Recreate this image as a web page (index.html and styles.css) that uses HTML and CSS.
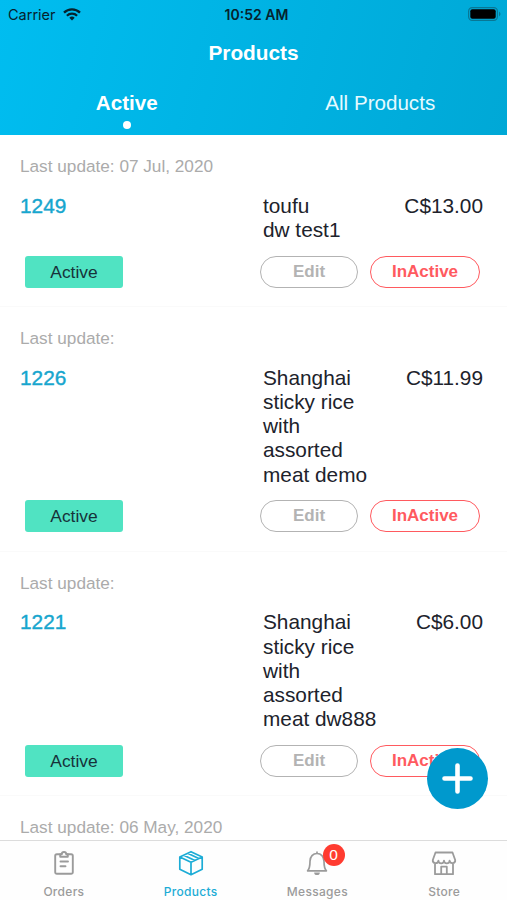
FILE: index.html
```html
<!DOCTYPE html>
<html lang="en">
<head>
<meta charset="utf-8">
<title>Products</title>
<link rel="stylesheet" href="styles.css">
</head>
<body>
<div class="screen">
  <header class="header">
    <div class="status">
      <div class="carrier"><span class="carrier-name">Carrier</span>
        <svg class="wifi" width="18" height="13" viewBox="0 0 18 13" fill="none" stroke="#06222d" stroke-width="2.3"><path d="M1 4.6a11.5 11.5 0 0 1 16 0"/><path d="M3.9 7.8a7.3 7.3 0 0 1 10.2 0"/><path d="M9 12.4 6.3 9.8a3.8 3.8 0 0 1 5.4 0z" fill="#06222d" stroke="none"/></svg>
      </div>
      <div class="clock">10:52 AM</div>
      <div class="power">
        <svg width="33" height="14" viewBox="0 0 33 14"><rect x=".6" y=".6" width="28.8" height="12.8" rx="3.6" fill="none" stroke="#087795" stroke-width="1.2"/><rect x="2.3" y="2.3" width="25.4" height="9.4" rx="2" fill="#000"/><path d="M31 4.6q3 2.4 0 4.8z" fill="#087795"/></svg>
      </div>
    </div>
    <h1 class="title">Products</h1>
    <nav class="tabs">
      <div class="tab tab-on"><span>Active</span><i class="dot"></i></div>
      <div class="tab"><span>All Products</span></div>
    </nav>
  </header>
  <main class="list">
    <article class="item">
      <div class="date">Last update: 07 Jul, 2020</div>
      <div class="info"><span class="num">1249</span><span class="name">toufu<br>dw test1</span><span class="price">C$13.00</span></div>
      <div class="actions"><span class="state">Active</span><button class="btn edit">Edit</button><button class="btn off">InActive</button></div>
    </article>
    <article class="item">
      <div class="date">Last update:</div>
      <div class="info"><span class="num">1226</span><span class="name">Shanghai<br>sticky rice<br>with<br>assorted<br>meat demo</span><span class="price">C$11.99</span></div>
      <div class="actions"><span class="state">Active</span><button class="btn edit">Edit</button><button class="btn off">InActive</button></div>
    </article>
    <article class="item">
      <div class="date">Last update:</div>
      <div class="info"><span class="num">1221</span><span class="name">Shanghai<br>sticky rice<br>with<br>assorted<br>meat dw888</span><span class="price">C$6.00</span></div>
      <div class="actions"><span class="state">Active</span><button class="btn edit">Edit</button><button class="btn off">InActive</button></div>
    </article>
    <article class="item">
      <div class="date">Last update: 06 May, 2020</div>
    </article>
  </main>
  <nav class="bar">
    <a class="link">
      <svg class="icon" width="28" height="28" viewBox="0 0 28 28" fill="none" stroke="#9b9b9b" stroke-width="1.9" stroke-linejoin="round" stroke-linecap="round"><path d="M10.5 5.2H6.8a1.6 1.6 0 0 0-1.6 1.6v16.4a1.6 1.6 0 0 0 1.6 1.6h14.4a1.6 1.6 0 0 0 1.6-1.6V6.800a1.600 1.600 0 0 0-1.600-1.600h-3.700"/><path d="M10.200 7.700V5.200h1.600a2.200 2.200 0 0 1 4.400 0h1.600v2.500z"/><path d="M10.500 12.500h7.500M10.500 17.300h5"/></svg>
      <span>Orders</span>
    </a>
    <a class="link link-on">
      <svg class="icon" width="28" height="28" viewBox="0 0 28 28" fill="none" stroke="#1cacd6" stroke-width="1.7" stroke-linejoin="round"><path d="M14 2.700 25.200 8v12.200L14 25.700 2.800 20.200V8zM2.800 8 14 13.300 25.200 8M14 13.300v12.400M10.600 4.300l11.200 5.300M6.700 6.200l11.300 5.300"/></svg>
      <span>Products</span>
    </a>
    <a class="link">
      <svg class="icon" width="28" height="28" viewBox="0 0 28 28" fill="none" stroke="#9b9b9b" stroke-width="1.700" stroke-linejoin="round"><path d="M14 2.500v2M4.600 21.800h18.800c-2-2-2.400-4-2.400-9.500 0-4.700-3-7.800-7-7.800s-7 3.100-7 7.800c0 5.500-.4 7.500-2.400 9.500z"/><path d="M11.200 23.500h5.600a2.800 2.600 0 0 1-5.600 0z" fill="#9b9b9b" stroke="none"/></svg>
      <b class="badge">0</b>
      <span>Messages</span>
    </a>
    <a class="link">
      <svg class="icon" width="28" height="28" viewBox="0 0 28 28" fill="none" stroke="#9b9b9b" stroke-width="1.800" stroke-linejoin="round"><path d="M5.500 3.500h17l2.700 7.500a2.800 2.800 0 0 1-5.600.6 2.800 2.800 0 0 1-5.600 0 2.800 2.800 0 0 1-5.600 0A2.800 2.800 0 0 1 2.800 11zM5 14.500v10.700h18V14.500M11.200 25v-7.300h5.600V25"/></svg>
      <span>Store</span>
    </a>
  </nav>
  <button class="fab" aria-label="Add"><svg width="61" height="61" viewBox="0 0 61 61" stroke="#fff" stroke-width="4.600" stroke-linecap="round"><path d="M30.500 17.500v26M17.500 30.500h26"/></svg></button>
</div>
</body>
</html>
```
FILE: styles.css
```css
* { box-sizing: border-box; }
body { margin: 0; background: #fff; font-family: "Liberation Sans", Arial, sans-serif; }
.screen { position: relative; width: 507px; height: 900px; overflow: hidden; display: flex; flex-direction: column; }
.header { flex: none; height: 135px; background: linear-gradient(105deg, #00bdf0, #00a8d6); }
.status { display: grid; grid-template-columns: 1fr auto 1fr; align-items: center; height: 28px; padding: 0 6px 0 8px; font-family: Inter, sans-serif; font-size: 14px; color: #06222d; }
.carrier { display: flex; align-items: center; gap: 7px; }
.carrier-name { font-size: 14.5px; }
.clock { font-weight: 600; padding-left: 4px; }
.power { display: flex; justify-content: flex-end; }
.title { margin: 0; height: 49px; line-height: 49px; text-align: center; font-size: 20.8px; color: #fff; }
.tabs { display: grid; grid-template-columns: 1fr 1fr; color: #e6faff; font-size: 20.6px; }
.tab { display: flex; flex-direction: column; align-items: center; padding-top: 14px; line-height: 24px; }
.tab-on { font-weight: 700; color: #fff; }
.dot { width: 8px; height: 8px; margin-top: 6px; border-radius: 50%; background: #fff; }
.list { flex: 1; min-height: 0; overflow: hidden; }
.item { padding: 21px 24px 18.4px 20px; border-bottom: 1px solid #fafafa; }
.date { height: 20px; line-height: 20px; margin-bottom: 17.900px; font-size: 17.200px; color: #ababab; }
.info { display: grid; grid-template-columns: 243px 120px 1fr; font-size: 20.800px; line-height: 24.200px; color: #20222b; }
.num { color: #17a6ce; -webkit-text-stroke: 0.4px #17a6ce; }
.price { text-align: right; }
.actions { display: flex; align-items: center; height: 32px; margin-top: 13.300px; padding-left: 5px; }
.state { width: 98px; height: 32px; line-height: 32px; margin-right: 137px; border-radius: 3px; background: #50e3c2; color: #17323a; font-size: 17.400px; text-align: center; }
.btn { height: 32px; padding: 0; border: 1.500px solid; border-radius: 16px; background: none; font: bold 17px "Liberation Sans", Arial, sans-serif; }
.edit { width: 98px; color: #b3b3b3; }
.off { width: 110px; margin-left: 12px; color: #ff5a5f; }
.bar { flex: none; display: grid; grid-template-columns: repeat(4, 1fr); height: 60px; border-top: 1px solid #dcdcdc; background: #fefefe; }
.link { position: relative; display: flex; flex-direction: column; align-items: center; padding-top: 8px; padding-left: 1px; font: 500 12px/16px Inter, sans-serif; letter-spacing: .3px; color: #9b9b9b; }
.link-on { color: #1cacd6; }
.icon { margin-bottom: 7px; }
.badge { position: absolute; left: 69px; top: 3px; width: 22px; height: 22px; border-radius: 50%; background: #ff3b30; color: #fff; font: 400 15.500px/22px "Liberation Sans", sans-serif; letter-spacing: 0; text-align: center; }
.fab { position: absolute; left: 427px; top: 748px; width: 61px; height: 61px; padding: 0; border: 0; border-radius: 50%; background: #0099cd; }
.fab svg { display: block; }
```
